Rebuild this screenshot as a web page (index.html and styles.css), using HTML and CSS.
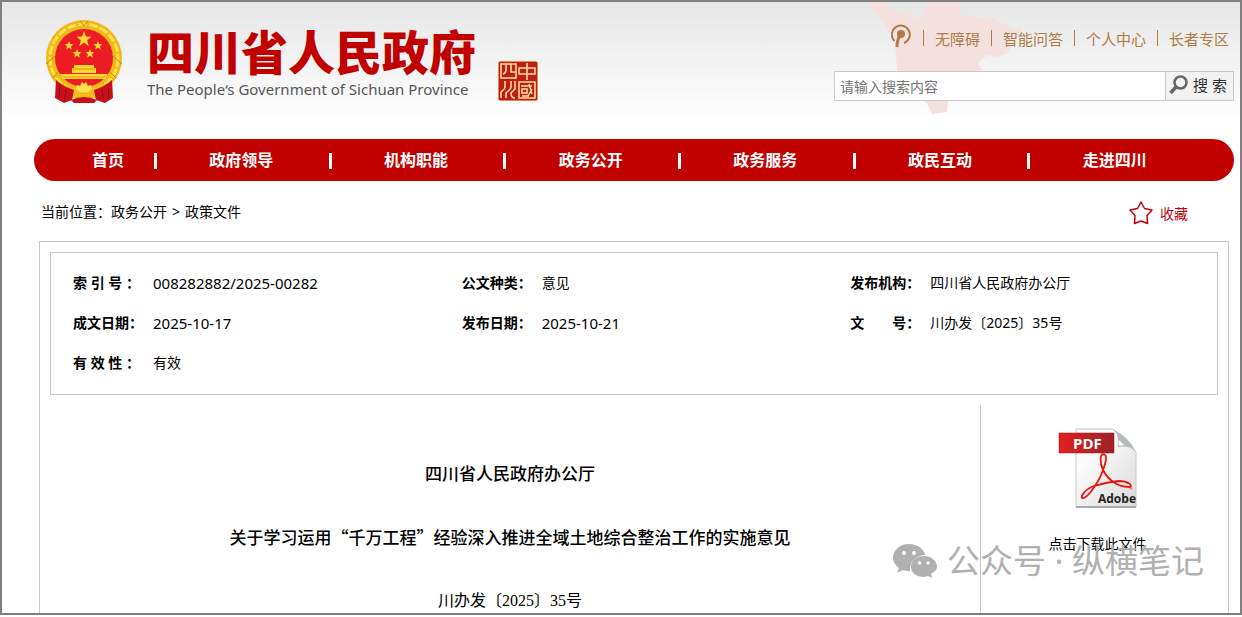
FILE: index.html
```html
<!DOCTYPE html>
<html lang="zh-CN">
<head>
    <meta charset="UTF-8">
    <title>四川省人民政府</title>
    <link rel="stylesheet" href="styles.css">
</head>
<body>
<div class="page">
    <header class="header">
        <svg class="map" width="270" height="112" viewBox="0 0 270 112" aria-hidden="true">
            <path d="M36 0 L55 0 L60 8 L70 11 L78 11 L80 18 L84 15 L91 16 L93 8 L101 0 L126 0 L128 9 L131 15 L139 13 L148 16 L161 15 L168 21 L175 23 L180 27 L188 26 L190 30 L185 35 L178 38 L179 45 L175 51 L165 55 L155 53 L146 61 L150 69 L140 85 L128 92 L116 98 L115 110 L100 112 L95 101 L88 98 L65 68 L63 41 L60 32 L56 30 L52 20 L45 13 Z" fill="#f5e0e0"/>
        </svg>
        <div class="brand">
            <svg class="emblem" width="78" height="84" viewBox="0 0 78 84" role="img" aria-label="国徽">
                <circle cx="38" cy="38" r="38" fill="#efb71a"/>
                <circle cx="38" cy="38" r="34" fill="none" stroke="#ffe04a" stroke-width="3" stroke-dasharray="9 2"/>
                <path d="M0 44 L9 36 M76 44 L67 36 M34 1 L38 6 L42 1 M6 58 L14 50 M70 58 L62 50" fill="none" stroke="#c08a10" stroke-width="1"/>
                <circle cx="38" cy="38" r="29" fill="#ec1c24"/>
                <g fill="#ffd92e">
                    <path d="M38 11 L40 16.500 L45.500 16.700 L41.200 20.200 L42.700 26 L38 22.700 L33.300 26 L34.800 20.200 L30.500 16.700 L36 16.500 Z"/>
                    <path id="star" d="M23 21 L24.200 24 L27.400 24.200 L25 26.300 L25.800 29.500 L23 27.800 L20.200 29.500 L21 26.300 L18.600 24.200 L21.800 24 Z"/>
                    <use href="#star" x="29"/>
                    <use href="#star" x="8" y="8"/>
                    <use href="#star" x="21" y="8"/>
                    <path d="M28 45 H48 V48 H50 V53 H26 V48 H28 Z"/>
                    <path d="M14 54 H62 L59 59 H17 Z"/>
                </g>
                <path d="M27 49 H49 M17 57 H59" stroke="#d99b12" stroke-width="1"/>
                <path d="M12 62 Q38 76 64 62 L60 78 H16 Z" fill="#f3bd1c"/>
                <path d="M10 60 Q18 67 28 70 L26 80 L18 83 L9 78 Z M66 60 Q58 67 48 70 L50 80 L59 83 L67 78 Z" fill="#c9101a"/>
                <path d="M14 66 L13 79 M20 69 L18 82 M56 69 L58 82 M62 66 L63 79" stroke="#8f0b12" stroke-width="1"/>
                <path d="M29 69 L31 65 L34 66 L36 62 L38 64 L40 62 L42 66 L45 65 L47 69 L42 73 H34 Z" fill="#ffe04a" stroke="#d99b12" stroke-width="0.500"/>
                <path d="M25 80 Q38 74 51 80 L48 83 H28 Z" fill="#c9101a"/>
            </svg>
            <div class="brand-text">
                <h1>四川省人民政府</h1>
                <p>The People‘s Government of Sichuan Province</p>
            </div>
            <svg class="seal" width="42" height="42" viewBox="0 0 42 42" role="img" aria-label="四川 中国">
                <rect x="1" y="1" width="40" height="40" rx="2" fill="#bd1f16" stroke="#fdf3b8"/>
                <g fill="none" stroke="#fbe3a4" stroke-width="1.500">
                    <path d="M4 4 H19 V18 H4 Z M9 4 V10 Q9 13 6 14 M14 4 V12 H18"/>
                    <path d="M22 8 H38 V14 H22 Z M30 3 V20"/>
                    <path d="M8 21 V27 Q8 29 4 32 V38 M14 21 V27 Q14 29 9 33 V38 M18 21 V29 L14 33 Q14 38 18 38"/>
                    <path d="M22 22 H38 V38 H22 Z M24 26 H35 M25 29 H30 V33 H25 Z M32 24 L35 34 M25 36 H32 M35 29 L31 36"/>
                </g>
            </svg>
        </div>
        <div class="tools">
            <nav class="links">
                <a href="#" aria-label="无障碍浏览">
                    <svg width="21" height="24" viewBox="0 0 21 24" aria-hidden="true">
                        <path d="M3.500 17 A9 9 0 1 1 13 19" fill="none" stroke="#ad7c46" stroke-width="2"/>
                        <circle cx="10" cy="10" r="4" fill="#ad7c46"/>
                        <path d="M10 10 Q6 15 6 23" fill="none" stroke="#ad7c46" stroke-width="3"/>
                    </svg>
                </a>
                <a href="#">无障碍</a>
                <a href="#">智能问答</a>
                <a href="#">个人中心</a>
                <a href="#">长者专区</a>
            </nav>
            <form class="search">
                <input type="text" placeholder="请输入搜索内容" aria-label="搜索内容">
                <button type="submit">
                    <svg width="19" height="20" viewBox="0 0 19 20" aria-hidden="true">
                        <circle cx="11.500" cy="7.500" r="6" fill="none" stroke="#666" stroke-width="2.500"/>
                        <path d="M7 12 L1.500 18" stroke="#666" stroke-width="3.500"/>
                    </svg>
                    搜 索
                </button>
            </form>
        </div>
    </header>

    <nav class="menu">
        <a href="#">首页</a>
        <a href="#">政府领导</a>
        <a href="#">机构职能</a>
        <a href="#">政务公开</a>
        <a href="#">政务服务</a>
        <a href="#">政民互动</a>
        <a href="#">走进四川</a>
    </nav>

    <div class="location">
        <div>当前位置：<a href="#">政务公开</a><span class="arrow">&gt;</span><a href="#">政策文件</a></div>
        <a class="collect" href="#">
            <svg width="24" height="24" viewBox="0 0 24 24" aria-hidden="true">
                <path d="M12 1 L15.500 7.500 L23 9 L18 14.500 L18.500 22.500 L12 20 L5.500 22.500 L6 14.500 L1 9 L8.500 7.500 Z" fill="none" stroke="#c1000c" stroke-width="1.500" stroke-linejoin="round"/>
            </svg>
            收藏
        </a>
    </div>

    <main class="content">
        <dl class="info">
            <div><dt>索 引 号 ：</dt><dd class="num">008282882/2025-00282</dd></div>
            <div><dt>公文种类：</dt><dd>意见</dd></div>
            <div><dt>发布机构：</dt><dd>四川省人民政府办公厅</dd></div>
            <div><dt>成文日期：</dt><dd class="num">2025-10-17</dd></div>
            <div><dt>发布日期：</dt><dd class="num">2025-10-21</dd></div>
            <div><dt>文　　号：</dt><dd>川办发〔2025〕35号</dd></div>
            <div><dt>有 效 性 ：</dt><dd>有效</dd></div>
        </dl>
        <div class="main-row">
            <article class="article">
                <h2>四川省人民政府办公厅</h2>
                <h2>关于学习运用“千万工程”经验深入推进全域土地综合整治工作的实施意见</h2>
                <p>川办发〔2025〕35号</p>
            </article>
            <aside class="download">
                <a href="#">
                    <svg width="80" height="80" viewBox="0 0 80 80" aria-hidden="true">
                        <defs>
                            <linearGradient id="paper" x1="0" y1="0" x2="1" y2="1">
                                <stop offset="0.300" stop-color="#fbfbfb"/>
                                <stop offset="1" stop-color="#d9d9d9"/>
                            </linearGradient>
                            <linearGradient id="label" x1="0" y1="0" x2="1" y2="0">
                                <stop offset="0" stop-color="#e31f1f"/>
                                <stop offset="1" stop-color="#9c2226"/>
                            </linearGradient>
                        </defs>
                        <path d="M18 1 H55 L78 24 V79 H18 Z" fill="url(#paper)" stroke="#c4c8c6"/>
                        <path d="M18 79 H78" stroke="#9a9a9a" stroke-width="1.500"/>
                        <path d="M55 1 Q62 8 60 19 Q72 17 78 24 Q72 10 55 1 Z" fill="#b6bab8"/>
                        <path d="M61 12 L66 17 L61 18 Z" fill="#fff"/>
                        <rect x="1" y="5" width="55" height="20" fill="url(#label)" stroke="#8f1c20" stroke-width="0.500"/>
                        <text class="pdf-name" x="15" y="21">PDF</text>
                        <path d="M47 27 C41 23 42 36 45 42 C50 52 60 59 71 59 C76 58 70 53 61 53 C50 54 43 56 36 58 M45 42 C42 52 30 70 25 70 C21 70 27 61 36 58 M45 42 C48 34 49 28 47 27" fill="none" stroke="#e8130c" stroke-width="1.800"/>
                        <circle cx="73" cy="60" r="1.200" fill="none" stroke="#e8130c" stroke-width="0.500"/>
                        <text class="adobe-name" x="40" y="75">Adobe</text>
                    </svg>
                    <span>点击下载此文件</span>
                </a>
            </aside>
        </div>
    </main>

    <div class="watermark">
        <svg width="44" height="36" viewBox="0 0 44 36" aria-hidden="true">
            <path d="M16 1 C7 1 0 7 0 14.500 C0 19 2 22 6 25 L4 30 L10 27 Q14 28.500 17 28 C16 19 23 12 32 12 C31 6 25 1 16 1 Z" fill="#b0b0b0"/>
            <path d="M31 13 C23 13 18 18 18 23.500 C18 30 24 34 31 34 L35 33 L39 35 L38 31 C41 29 44 27 44 23.500 C44 18 38 13 31 13 Z" fill="#b0b0b0"/>
            <g fill="#fff">
                <circle cx="11" cy="10" r="2"/><circle cx="21" cy="10" r="2"/>
                <circle cx="26.500" cy="20" r="1.700"/><circle cx="35" cy="20" r="1.700"/>
            </g>
        </svg>
        <span>公众号 · 纵横笔记</span>
    </div>
</div>
</body>
</html>
```
FILE: styles.css
```css
* {
    box-sizing: border-box;
}

body {
    margin: 0;
    font-family: "Noto Sans", "Noto Sans CJK SC", sans-serif;
    font-size: 14px;
    color: #000;
    background-color: #fff;
}

a {
    color: inherit;
    text-decoration: none;
}

h1, h2, p, dl, dd {
    margin: 0;
}

.page {
    position: relative;
    height: calc(100vh - 2px);
    overflow: hidden;
    border: 2px solid #808080;
}

/* header */
.header {
    position: relative;
    display: flex;
    justify-content: space-between;
    height: 137px;
    padding: 0 6px 0 44px;
    background: linear-gradient(#e6e6e6, #fff 120px);
}

.map {
    position: absolute;
    top: 0;
    right: 138px;
}

.brand {
    display: flex;
    padding-top: 18px;
}

.brand-text {
    margin-left: 23px;
}

.brand-text h1 {
    font-family: "Noto Sans CJK SC", sans-serif;
    font-size: 47px;
    font-weight: 900;
    line-height: 60px;
    color: #c10000;
}

.brand-text p {
    font-size: 15px;
    line-height: 18px;
    color: #555;
}

.seal {
    margin: 40px 0 0 21px;
}

.tools {
    position: relative;
    width: 400px;
    padding-top: 24px;
}

.links {
    display: flex;
    justify-content: flex-end;
    align-items: center;
    height: 24px;
    margin-right: 5px;
    font-size: 15px;
    color: #ad7c46;
}

.links a + a {
    display: flex;
    align-items: center;
}

.links a + a::before {
    content: "";
    width: 1px;
    height: 16px;
    margin: 0 11px;
    background-color: #ad7c46;
}

.search {
    display: flex;
    height: 30px;
    margin-top: 21px;
    border: 1px solid #c8c8c8;
}

.search input {
    flex: 1;
    min-width: 0;
    padding: 0 5px;
    border: none;
    border-right: 1px solid #c8c8c8;
    font: inherit;
    background-color: #fff;
}

.search input::placeholder {
    color: #757575;
}

.search button {
    display: flex;
    align-items: center;
    gap: 5px;
    width: 67px;
    padding: 0 3px 3px;
    border: none;
    font: inherit;
    font-size: 15px;
    white-space: nowrap;
    color: #333;
    background-color: #f2f2f2;
}

/* red menu */
.menu {
    display: flex;
    height: 42px;
    margin: 0 6px 0 32px;
    padding-right: 32px;
    border-radius: 21px;
    font-size: 16px;
    font-weight: bold;
    line-height: 42px;
    text-align: center;
    color: #fff;
    background-color: #c10000;
}

.menu a {
    position: relative;
    flex: 1;
}

.menu a:first-child {
    flex: none;
    width: 120px;
    padding-left: 28px;
}

.menu a + a::before {
    content: "";
    position: absolute;
    top: 14px;
    left: 0;
    width: 3px;
    height: 16px;
    background-color: #fff;
}

.location {
    display: flex;
    justify-content: space-between;
    align-items: center;
    height: 60px;
    padding: 0 52px 0 39px;
}

.location .arrow {
    margin: 0 5px;
}

.collect {
    display: flex;
    align-items: center;
    gap: 7px;
    padding-top: 4px;
    color: #c1000c;
}

/* document */
.content {
    margin: 0 11px 0 37px;
    padding: 10px;
    border: 1px solid #c8c8c8;
}

.info {
    display: grid;
    grid-template-columns: repeat(3, 1fr);
    padding: 10px 0 11px;
    border: 1px solid #c8c8c8;
    line-height: 40px;
}

.info div {
    display: flex;
    padding-left: 22px;
}

.info dt {
    width: 80px;
    font-weight: bold;
    white-space: pre;
}

.info .num {
    font-size: 15px;
}

.main-row {
    display: flex;
    margin-top: 10px;
}

.article {
    flex: 1;
    padding: 52px 10px 0 0;
    text-align: center;
}

.article h2 {
    margin-bottom: 32px;
    font-size: 17px;
    font-weight: 500;
    line-height: 32px;
    font-family: "Noto Sans CJK SC", sans-serif;
}

.article p {
    font-family: "Liberation Serif", "Noto Sans CJK SC", sans-serif;
    font-size: 16px;
    line-height: 32px;
}

.download {
    width: 238px;
    min-height: 240px;
    padding: 23px 4px 0 0;
    border-left: 1px solid #c8c8c8;
}

.download a {
    display: flex;
    flex-direction: column;
    align-items: center;
    gap: 25px;
}

.pdf-name, .adobe-name {
    font-family: "Open Sans", sans-serif;
    font-size: 15px;
    font-weight: bold;
    fill: #fff;
}

.adobe-name {
    font-size: 12px;
    fill: #222;
}

.watermark {
    position: absolute;
    right: 36px;
    bottom: 32px;
    display: flex;
    align-items: center;
    gap: 10px;
    font-size: 33px;
    line-height: 40px;
    color: #b0b0b0;
}
```
